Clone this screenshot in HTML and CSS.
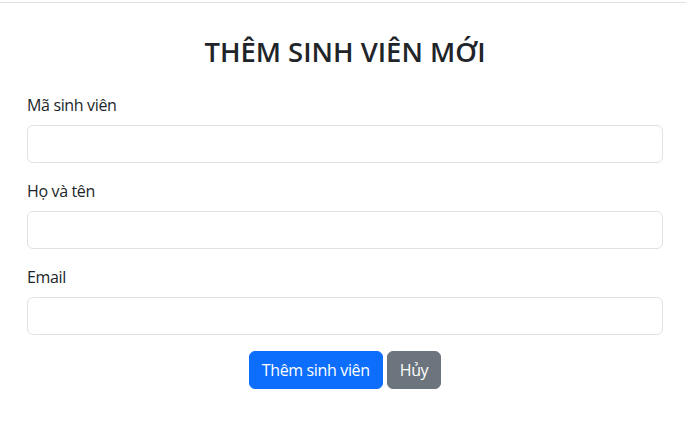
FILE: index.html
```html
<!DOCTYPE html>
<html lang="vi">
<head>
<meta charset="utf-8">
<title>Thêm sinh viên mới</title>
<link rel="stylesheet" href="styles.css">
</head>
<body>
<div class="topbar"></div>
<main class="container">
  <h2 class="title">THÊM SINH VIÊN MỚI</h2>
  <form class="form">
    <div class="field">
      <label class="label" for="ma">Mã sinh viên</label>
      <input class="input" id="ma" type="text">
    </div>
    <div class="field">
      <label class="label" for="ten">Họ và tên</label>
      <input class="input" id="ten" type="text">
    </div>
    <div class="field">
      <label class="label" for="email">Email</label>
      <input class="input" id="email" type="email">
    </div>
    <div class="actions">
      <button class="btn btn-primary" type="submit">Thêm sinh viên</button>
      <button class="btn btn-secondary" type="button">Hủy</button>
    </div>
  </form>
</main>
</body>
</html>
```
FILE: styles.css
```css
* { box-sizing: border-box; }
html, body { margin: 0; padding: 0; background: #fff; }
body {
  font-family: "Open Sans", "Noto Sans", sans-serif;
  font-size: 16px;
  line-height: 1.5;
  color: #212529;
  letter-spacing: -0.35px;
}
.topbar {
  height: 3px;
  border-bottom: 1px solid #dee2e6;
}
.container {
  padding: 33px 23px 0 27px;
}
.title {
  margin: 0 0 24px;
  text-align: center;
  font-size: 27.4px;
  font-weight: 600;
  line-height: 1.2;
  letter-spacing: 0;
  color: #212529;
}
.field { margin-bottom: 16px; }
.label {
  display: block;
  margin-bottom: 8px;
  font-size: 16px;
}
.input {
  display: block;
  width: 100%;
  height: 38px;
  padding: 6px 12px;
  font: inherit;
  color: #212529;
  background: #fff;
  border: 1px solid #dee2e6;
  border-radius: 6px;
}
.actions {
  display: flex;
  justify-content: center;
  gap: 4px;
}
.btn {
  height: 38px;
  padding: 6px 12px;
  font: inherit;
  font-size: 16px;
  line-height: 1.5;
  letter-spacing: -0.35px;
  color: #fff;
  border: 1px solid transparent;
  border-radius: 6px;
  cursor: pointer;
}
.btn-primary { background: #0d6efd; border-color: #0d6efd; }
.btn-secondary { background: #6c757d; border-color: #6c757d; }
```
